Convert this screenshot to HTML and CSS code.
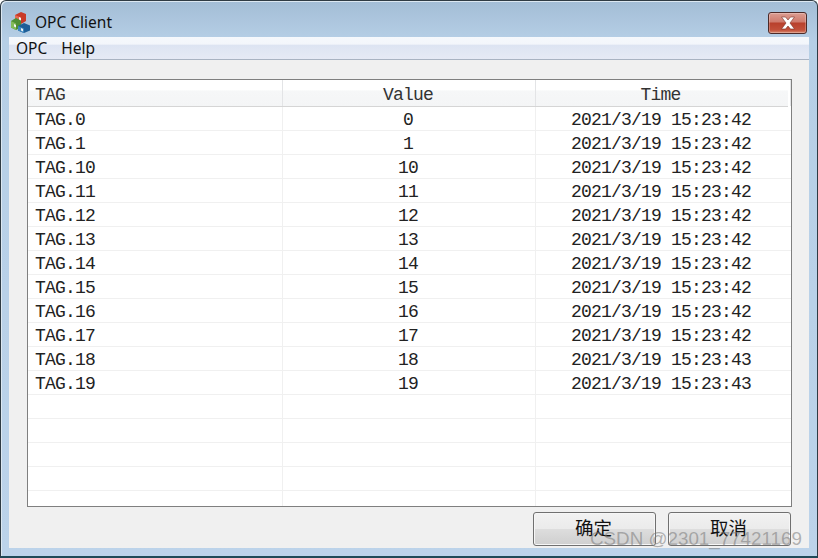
FILE: index.html
```html
<!DOCTYPE html>
<html lang="zh">
<head>
<meta charset="utf-8">
<title>OPC Client</title>
<link rel="stylesheet" href="styles.css">
</head>
<body>
<div class="window">
  <div class="titlebar">
    <svg class="app-icon" width="19" height="21" viewBox="0 0 19 21">
      <path d="M4 3l6-3 5 2v7l-5 3-6-3z" fill="#c93a28"/>
      <path d="M4 3l6 2.500v7l-6-3z" fill="#e66a52"/>
      <path d="M0 9l5-3 5 2.500v7l-5 2.500-5-2.500z" fill="#4f8f34"/>
      <path d="M0 9l5 2.500v6.500l-5-2.500z" fill="#82bb58"/>
      <path d="M7 14l6-3 6 2.500v5l-6 2.500-6-2.500z" fill="#1f5f98"/>
      <path d="M7 14l6 2.500v4.500l-6-2.500z" fill="#3f88c0"/>
      <path d="M8 5l2 1v2.500l-2-1zM3 12l2 1v2.500l-2-1zM10 16l2 1v2.500l-2-1z" fill="#f4f4f4"/>
    </svg>
    <span class="title">OPC Client</span>
    <button class="close" aria-label="关闭">
      <svg width="20" height="14" viewBox="0 0 20 14"><path d="M3.500 1h4l2.500 3 2.500-3h4l-4.500 6 4.500 6h-4l-2.500-3-2.500 3h-4l4.500-6z" fill="#fff" stroke="#7a3026" stroke-width=".6"/></svg>
    </button>
  </div>
  <div class="client">
    <div class="menu"><span class="menu-item">OPC</span><span class="menu-item">Help</span></div>
    <div class="body">
      <div class="list">
        <div class="row head"><div>TAG</div><div>Value</div><div>Time</div></div>
        <div class="row"><div>TAG.0</div><div>0</div><div>2021/3/19 15:23:42</div></div>
        <div class="row"><div>TAG.1</div><div>1</div><div>2021/3/19 15:23:42</div></div>
        <div class="row"><div>TAG.10</div><div>10</div><div>2021/3/19 15:23:42</div></div>
        <div class="row"><div>TAG.11</div><div>11</div><div>2021/3/19 15:23:42</div></div>
        <div class="row"><div>TAG.12</div><div>12</div><div>2021/3/19 15:23:42</div></div>
        <div class="row"><div>TAG.13</div><div>13</div><div>2021/3/19 15:23:42</div></div>
        <div class="row"><div>TAG.14</div><div>14</div><div>2021/3/19 15:23:42</div></div>
        <div class="row"><div>TAG.15</div><div>15</div><div>2021/3/19 15:23:42</div></div>
        <div class="row"><div>TAG.16</div><div>16</div><div>2021/3/19 15:23:42</div></div>
        <div class="row"><div>TAG.17</div><div>17</div><div>2021/3/19 15:23:42</div></div>
        <div class="row"><div>TAG.18</div><div>18</div><div>2021/3/19 15:23:43</div></div>
        <div class="row"><div>TAG.19</div><div>19</div><div>2021/3/19 15:23:43</div></div>
        <div class="row"><div></div><div></div><div></div></div>
        <div class="row"><div></div><div></div><div></div></div>
        <div class="row"><div></div><div></div><div></div></div>
        <div class="row"><div></div><div></div><div></div></div>
        <div class="row last"><div></div><div></div><div></div></div>
      </div>
      <div class="actions">
        <button class="btn">确定</button>
        <button class="btn">取消</button>
      </div>
    </div>
  </div>
  <div class="watermark">CSDN @2301_77421169</div>
</div>
</body>
</html>
```
FILE: styles.css
```css
* { box-sizing: border-box; }
html, body { margin: 0; padding: 0; }
body { width: 818px; height: 558px; overflow: hidden; background: #fff; }
.window {
  position: relative;
  width: 818px;
  height: 558px;
  display: flex;
  flex-direction: column;
  padding: 0 8px 8px 8px;
  background: linear-gradient(180deg, #a3bdd6 0, #b6cfe6 40px, #bcd3ea 100%);
  border: 1px solid #2f3b44;
  border-bottom: 2px solid #1f4a58;
  border-radius: 6px 6px 0 0;
  box-shadow: inset 1px 1px 0 #dce8f2;
}
.titlebar {
  height: 36px;
  flex: none;
  display: flex;
  align-items: center;
  padding-left: 2px;
  gap: 5px;
}
.app-icon { flex: none; margin-top: 6px; }
.title {
  font: 15.500px "Noto Sans", sans-serif;
  color: #111;
  margin-top: 6px;
}
.close {
  margin-left: auto;
  margin-right: 2px;
  margin-top: 7px;
  width: 39px;
  height: 22px;
  padding: 0;
  display: flex;
  align-items: center;
  justify-content: center;
  border: 1px solid #4c2a28;
  border-radius: 3px;
  background: linear-gradient(180deg, #dc9d92 0, #cf7a6c 45%, #b8402c 50%, #c2503a 85%, #d88a70 100%);
  box-shadow: inset 0 0 0 1px rgba(255,255,255,.25);
}
.client {
  flex: 1;
  display: flex;
  flex-direction: column;
  background: #f0f0f0;
  min-height: 0;
}
.menu {
  height: 23px;
  flex: none;
  display: flex;
  gap: 14px;
  padding: 0 7px;
  align-items: center;
  font: 15.500px "Noto Sans", sans-serif;
  color: #111;
  background: linear-gradient(180deg, #f5f8fc 0, #f3f6fb 32%, #dde4f2 38%, #e6eaf5 100%);
  border-bottom: 1px solid #a9b3c2;
}
.body {
  flex: 1;
  display: flex;
  flex-direction: column;
  padding: 19px 17px 3px 18px;
  min-height: 0;
}
.list {
  height: 428px;
  flex: none;
  overflow: hidden;
  background: #fff;
  border: 1px solid #7f7f7f;
  font: 18px "Liberation Mono", "Noto Sans CJK SC", monospace;
  letter-spacing: -.8px;
  color: #222;
}
.row {
  display: grid;
  grid-template-columns: 255px 253px 255px;
  height: 24px;
  line-height: 27px;
  border-bottom: 1px solid #f0f0f0;
}
.row > div {
  height: 24px;
  border-right: 1px solid #f0f0f0;
  text-align: center;
  white-space: pre;
  padding-right: 2px;
}
.row > div:first-child { text-align: left; padding-left: 7px; }
.row > div:last-child { border-right: 0; padding-right: 5px; }
.row.last { border-bottom: 0; }
.row.head {
  height: 27px;
  line-height: 31px;
  margin-right: 3px;
  background: linear-gradient(180deg, #fff 0, #fff 38%, #f6f7f8 42%, #f4f5f6 100%);
  border-bottom: 1px solid #d5d5d5;
  color: #333;
}
.row.head > div { height: 26px; border-right: 1px solid #e3e4e6; }
.row.head > div:last-child { border-right: 1px solid #e3e4e6; }
.actions {
  flex: 1;
  display: flex;
  justify-content: flex-end;
  gap: 12px;
  padding: 5px 0 0;
  margin-right: 1px;
}
.btn {
  width: 123px;
  height: 34px;
  padding: 0 2px 5px 0;
  border: 1px solid #707070;
  border-radius: 3px;
  background: linear-gradient(180deg, #f2f2f2 0, #ebebeb 49%, #dddddd 51%, #cfcfcf 100%);
  box-shadow: inset 0 0 0 1px #f6f6f6;
  font: 18.500px "Noto Sans CJK SC", sans-serif;
  color: #111;
}
.watermark {
  position: absolute;
  left: 589px;
  top: 527px;
  font: 18.800px "Liberation Sans", sans-serif;
  color: rgba(120,120,120,.55);
  white-space: nowrap;
}
```
